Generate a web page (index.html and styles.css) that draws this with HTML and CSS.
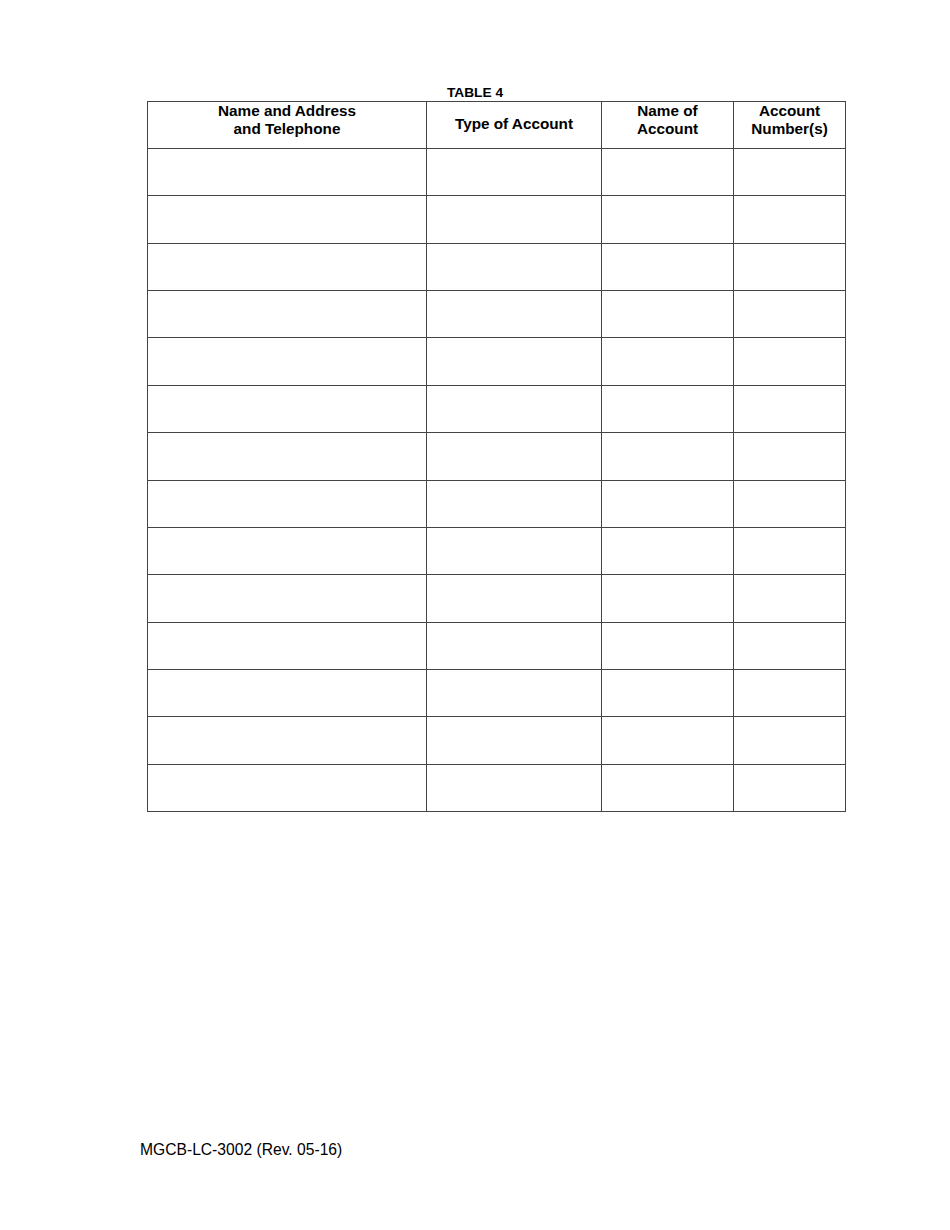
FILE: index.html
```html
<!DOCTYPE html>
<html>
<head>
<meta charset="utf-8">
<title>Table 4</title>
<link rel="stylesheet" href="styles.css">
</head>
<body>
<div class="page">
  <div class="caption">TABLE 4</div>
  <table class="grid">
    <colgroup>
      <col class="c1"><col class="c2"><col class="c3"><col class="c4">
    </colgroup>
    <thead>
      <tr>
        <th>Name and Address<br>and Telephone</th>
        <th class="single">Type of Account</th>
        <th>Name of<br>Account</th>
        <th>Account<br>Number(s)</th>
      </tr>
    </thead>
    <tbody>
      <tr><td></td><td></td><td></td><td></td></tr>
      <tr><td></td><td></td><td></td><td></td></tr>
      <tr><td></td><td></td><td></td><td></td></tr>
      <tr><td></td><td></td><td></td><td></td></tr>
      <tr><td></td><td></td><td></td><td></td></tr>
      <tr><td></td><td></td><td></td><td></td></tr>
      <tr><td></td><td></td><td></td><td></td></tr>
      <tr><td></td><td></td><td></td><td></td></tr>
      <tr><td></td><td></td><td></td><td></td></tr>
      <tr><td></td><td></td><td></td><td></td></tr>
      <tr><td></td><td></td><td></td><td></td></tr>
      <tr><td></td><td></td><td></td><td></td></tr>
      <tr><td></td><td></td><td></td><td></td></tr>
      <tr><td></td><td></td><td></td><td></td></tr>
    </tbody>
  </table>
  <div class="footer">MGCB-LC-3002 (Rev. 05-16)</div>
</div>
</body>
</html>
```
FILE: styles.css
```css
html, body {
  margin: 0;
  padding: 0;
  background: #ffffff;
}
body {
  font-family: "Liberation Sans", Arial, sans-serif;
  color: #000000;
  width: 950px;
  height: 1230px;
  overflow: hidden;
}
.page {
  width: 950px;
}
.caption {
  margin-top: 86px;
  height: 15px;
  font-size: 13.7px;
  line-height: 14px;
  font-weight: bold;
  text-align: center;
}
.grid {
  margin-left: 147px;
  border-collapse: separate;
  border-spacing: 0;
  table-layout: fixed;
  width: 699px;
  border-left: 1px solid #444444;
  border-top: 1px solid #444444;
}
.c1 { width: 279px; }
.c2 { width: 175px; }
.c3 { width: 132px; }
.c4 { width: 112px; }
.grid th,
.grid td {
  box-sizing: border-box;
  padding: 0;
  border-right: 1px solid #444444;
  border-bottom: 1px solid #444444;
}
.grid th {
  height: 47px;
  vertical-align: top;
  text-align: center;
  font-size: 15.3px;
  line-height: 18px;
  font-weight: bold;
}
.grid th.single {
  padding-top: 13px;
}
.grid td {
  height: 47.36px;
}
.footer {
  margin-top: 329px;
  margin-left: 140px;
  font-size: 15.65px;
  line-height: 18px;
}
```
